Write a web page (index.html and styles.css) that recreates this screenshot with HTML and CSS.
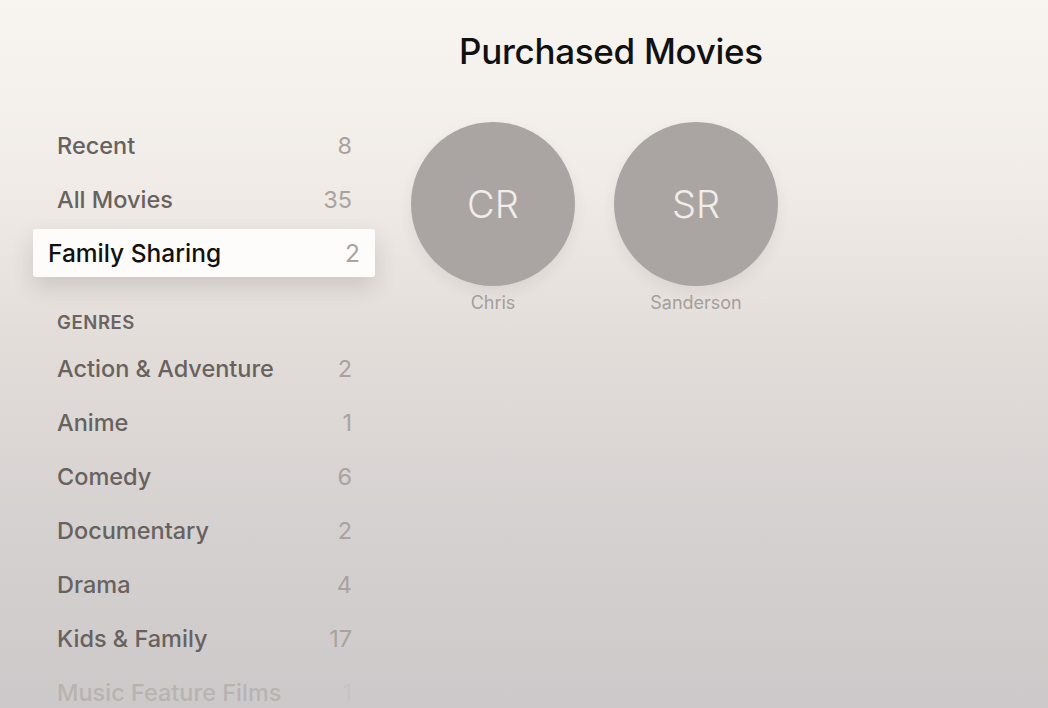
FILE: index.html
```html
<!DOCTYPE html>
<html>

<head>
    <meta name="viewport" content="width=device-width,initial-scale=1.0">
    <title>Purchased Movies</title>
    <link rel="stylesheet" href="styles.css">
</head>

<body>
    <header class="top">
        <h1 class="title">Purchased Movies</h1>
    </header>
    <div class="layout">
        <nav class="sidebar">
            <ul class="menu">
                <li class="menu-item"><span>Recent</span><span class="count">8</span></li>
                <li class="menu-item"><span>All Movies</span><span class="count">35</span></li>
                <li class="menu-item focused"><span>Family Sharing</span><span class="count">2</span></li>
            </ul>
            <div class="menu-heading">GENRES</div>
            <ul class="menu">
                <li class="menu-item"><span>Action &amp; Adventure</span><span class="count">2</span></li>
                <li class="menu-item"><span>Anime</span><span class="count">1</span></li>
                <li class="menu-item"><span>Comedy</span><span class="count">6</span></li>
                <li class="menu-item"><span>Documentary</span><span class="count">2</span></li>
                <li class="menu-item"><span>Drama</span><span class="count">4</span></li>
                <li class="menu-item"><span>Kids &amp; Family</span><span class="count">17</span></li>
                <li class="menu-item faded"><span>Music Feature Films</span><span class="count">1</span></li>
            </ul>
        </nav>
        <section class="members">
            <div class="member">
                <div class="avatar">CR</div>
                <div class="member-name">Chris</div>
            </div>
            <div class="member">
                <div class="avatar">SR</div>
                <div class="member-name">Sanderson</div>
            </div>
        </section>
    </div>
</body>

</html>
```

FILE: styles.css
```css
html,
body {
    height: 100%;
}

body {
    margin: 0;
    padding: 0;
    overflow: hidden;
    font-family: Inter, "Noto Sans", sans-serif;
    background: linear-gradient(180deg, #f8f5f1 0%, #f1ece8 25%, #e2dcd9 50%, #d5d1d0 75%, #cdc9ca 100%);
    color: #6a6462;
}

.top {
    height: 118px;
    display: flex;
    justify-content: center;
    padding-left: 174px;
    box-sizing: border-box;
}

.title {
    margin: 0;
    padding-top: 30px;
    font-size: 35px;
    font-weight: 500;
    color: #111;
    letter-spacing: -0.3px;
    line-height: 42px;
}

.layout {
    display: flex;
}

.sidebar {
    width: 342px;
    margin-left: 33px;
}

.menu {
    list-style: none;
    margin: 0;
    padding: 0;
}

.menu-item {
    display: flex;
    justify-content: space-between;
    align-items: center;
    height: 54px;
    padding: 0 23px 0 24px;
    box-sizing: border-box;
    font-size: 23.5px;
    font-weight: 500;
    color: #68625f;
}

.count {
    font-weight: 400;
    color: #a8a3a0;
}

.menu-item.focused {
    height: 48px;
    margin: 3px 0;
    padding: 0 15px;
    background: #fdfcfb;
    border-radius: 3px;
    box-shadow: 0 10px 22px rgba(60, 50, 40, 0.16);
    color: #111;
    font-size: 24.5px;
}

.menu-item.faded {
    color: #b8b3b1;
}

.menu-item.faded .count {
    color: #c7c3c2;
}

.menu-heading {
    height: 61px;
    box-sizing: border-box;
    padding: 31px 0 0 24px;
    font-size: 18.5px;
    font-weight: 600;
    letter-spacing: 0.6px;
    color: #6a6462;
}

.members {
    display: flex;
    gap: 39px;
    margin-left: 36px;
    padding-top: 4px;
}

.member {
    display: flex;
    flex-direction: column;
    align-items: center;
}

.avatar {
    width: 164px;
    height: 164px;
    border-radius: 50%;
    background: #aaa5a2;
    color: #f1edea;
    display: flex;
    justify-content: center;
    align-items: center;
    font-size: 38px;
    font-weight: 300;
    box-shadow: 0 6px 14px rgba(60, 50, 40, 0.08);
}

.member-name {
    margin-top: 6px;
    font-size: 18px;
    color: #a39e9b;
}
```
